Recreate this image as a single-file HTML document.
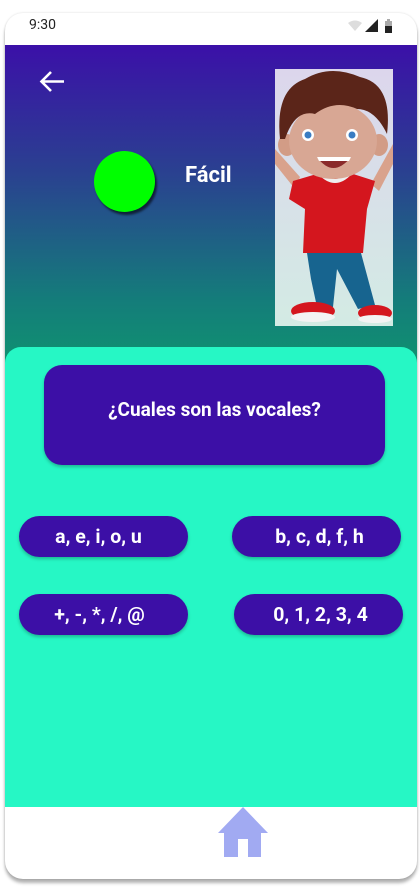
<!DOCTYPE html>
<html><head><meta charset="utf-8"><style>
*{margin:0;padding:0;box-sizing:border-box}
body{width:420px;height:891px;background:#fff;position:relative;overflow:hidden;font-family:"Roboto","Liberation Sans",sans-serif}
.frame{position:absolute;left:5px;top:13px;width:412px;height:866px;border-radius:18px;background:#fff;box-shadow:0 4px 3px rgba(0,0,0,.3),0 0 2px rgba(0,0,0,.15);overflow:hidden}
.time{position:absolute;left:29px;top:17px;font-size:14px;color:#222}
.grad{position:absolute;left:5px;top:45px;width:412px;height:320px;background:linear-gradient(#3b10a8 0%,#2a4190 40%,#147d7a 80%,#0f9270 100%)}
.panel{position:absolute;left:5px;top:347px;width:412px;height:460px;background:#26f7c5;border-radius:16px 16px 0 0}
.q{position:absolute;left:44px;top:365px;width:341px;height:100px;background:#3c0fa6;border-radius:18px;box-shadow:0 2px 3px rgba(0,0,0,.25);color:#fff;font-weight:bold;font-size:19px;text-align:center;padding-top:33px}
.b{position:absolute;width:169px;height:41px;background:#3c0fa6;border-radius:21px;box-shadow:0 2px 3px rgba(0,0,0,.25);color:#fff;font-weight:bold;font-size:19.5px;line-height:41px;text-align:center}
.facil{position:absolute;left:185px;top:163px;color:#fff;font-weight:bold;font-size:22px}
.ball{position:absolute;left:94px;top:151px;width:61px;height:61px;border-radius:50%;background:#00ff00;box-shadow:2px 3px 2px rgba(0,0,0,.6)}
</style></head><body>
<div class="frame"></div>
<div class="time">9:30</div>
<svg style="position:absolute;left:346px;top:19px" width="46" height="15" viewBox="0 0 46 15">
<path d="M2 4 Q9 -1 16 4 L9 12 Z" fill="#ddd"/>
<path d="M19 13 L32 13 L32 0 Z" fill="#222"/>
<rect x="39" y="2" width="7" height="12" fill="#222"/><rect x="39" y="2" width="7" height="5" fill="#aaa"/><rect x="41" y="0" width="3" height="2" fill="#aaa"/>
</svg>
<div class="grad"></div>
<svg style="position:absolute;left:37px;top:67px" width="30" height="30" viewBox="0 0 30 30"><path d="M27 14.5H5M14 5L4.5 14.5 14 24" stroke="#fff" stroke-width="2.6" fill="none"/></svg>
<div class="ball"></div>
<div class="facil">Fácil</div>
<svg style="position:absolute;left:275px;top:69px" width="118" height="257" viewBox="0 0 118 257">
<defs><linearGradient id="bg" x1="0" y1="0" x2="0" y2="1"><stop offset="0" stop-color="#dcd6ec"/><stop offset="1" stop-color="#d3ebe4"/></linearGradient></defs>
<rect width="118" height="257" fill="url(#bg)"/>
<path d="M0 95 L20 120 L25 108 L0 80Z" fill="#d9a28c"/>
<path d="M118 75 L96 115 L104 122 L118 95Z" fill="#d9a28c"/>
<path d="M18 112 L45 104 L75 104 L100 112 L92 140 L88 184 L28 184 L30 140 L14 130Z" fill="#d4161e"/>
<path d="M45 104 Q60 120 75 104" stroke="#eee" stroke-width="4" fill="none"/>
<path d="M32 184 L86 184 L100 236 L83 240 L62 200 L58 238 L42 238 L36 210Z" fill="#17648f"/>
<ellipse cx="38" cy="242" rx="22" ry="9" fill="#d4161e"/><ellipse cx="38" cy="248" rx="22" ry="5" fill="#f3f3f3"/>
<ellipse cx="100" cy="244" rx="17" ry="8" fill="#d4161e"/><ellipse cx="100" cy="250" rx="17" ry="4" fill="#f3f3f3"/>
<ellipse cx="12" cy="76" rx="9" ry="11" fill="#d29c86"/><ellipse cx="104" cy="76" rx="9" ry="11" fill="#d29c86"/>
<ellipse cx="58" cy="72" rx="44" ry="38" fill="#d8a794"/>
<path d="M5 70 Q0 20 30 10 Q55 -5 85 8 Q118 15 112 65 Q100 40 82 40 Q60 30 40 45 Q20 40 10 70Z" fill="#5b2519"/>
<circle cx="33" cy="66" r="6" fill="#fff"/><circle cx="33" cy="66" r="3.5" fill="#3a7cc2"/>
<circle cx="77" cy="66" r="6" fill="#fff"/><circle cx="77" cy="66" r="3.5" fill="#3a7cc2"/>
<path d="M42 88 Q58 110 76 88Z" fill="#8a2a2a"/><path d="M42 88 L76 88 L74 92 L44 92Z" fill="#fff"/>
</svg>
<div class="panel"></div>
<div class="q">¿Cuales son las vocales?</div>
<div class="b" style="left:19px;top:516px;padding-right:10px">a, e, i, o, u</div>
<div class="b" style="left:232px;top:516px;padding-left:6px">b, c, d, f, h</div>
<div class="b" style="left:19px;top:594px;padding-right:8px">+, -, *, /, @</div>
<div class="b" style="left:234px;top:594px;padding-left:4px">0, 1, 2, 3, 4</div>
<svg style="position:absolute;left:218px;top:807px" width="50" height="50" viewBox="0 0 50 50"><path d="M25 0 L50 26 L43 26 L43 50 L30 50 L30 32 L20 32 L20 50 L6 50 L6 26 L0 26Z" fill="#a1aaf2"/></svg>
</body></html>
